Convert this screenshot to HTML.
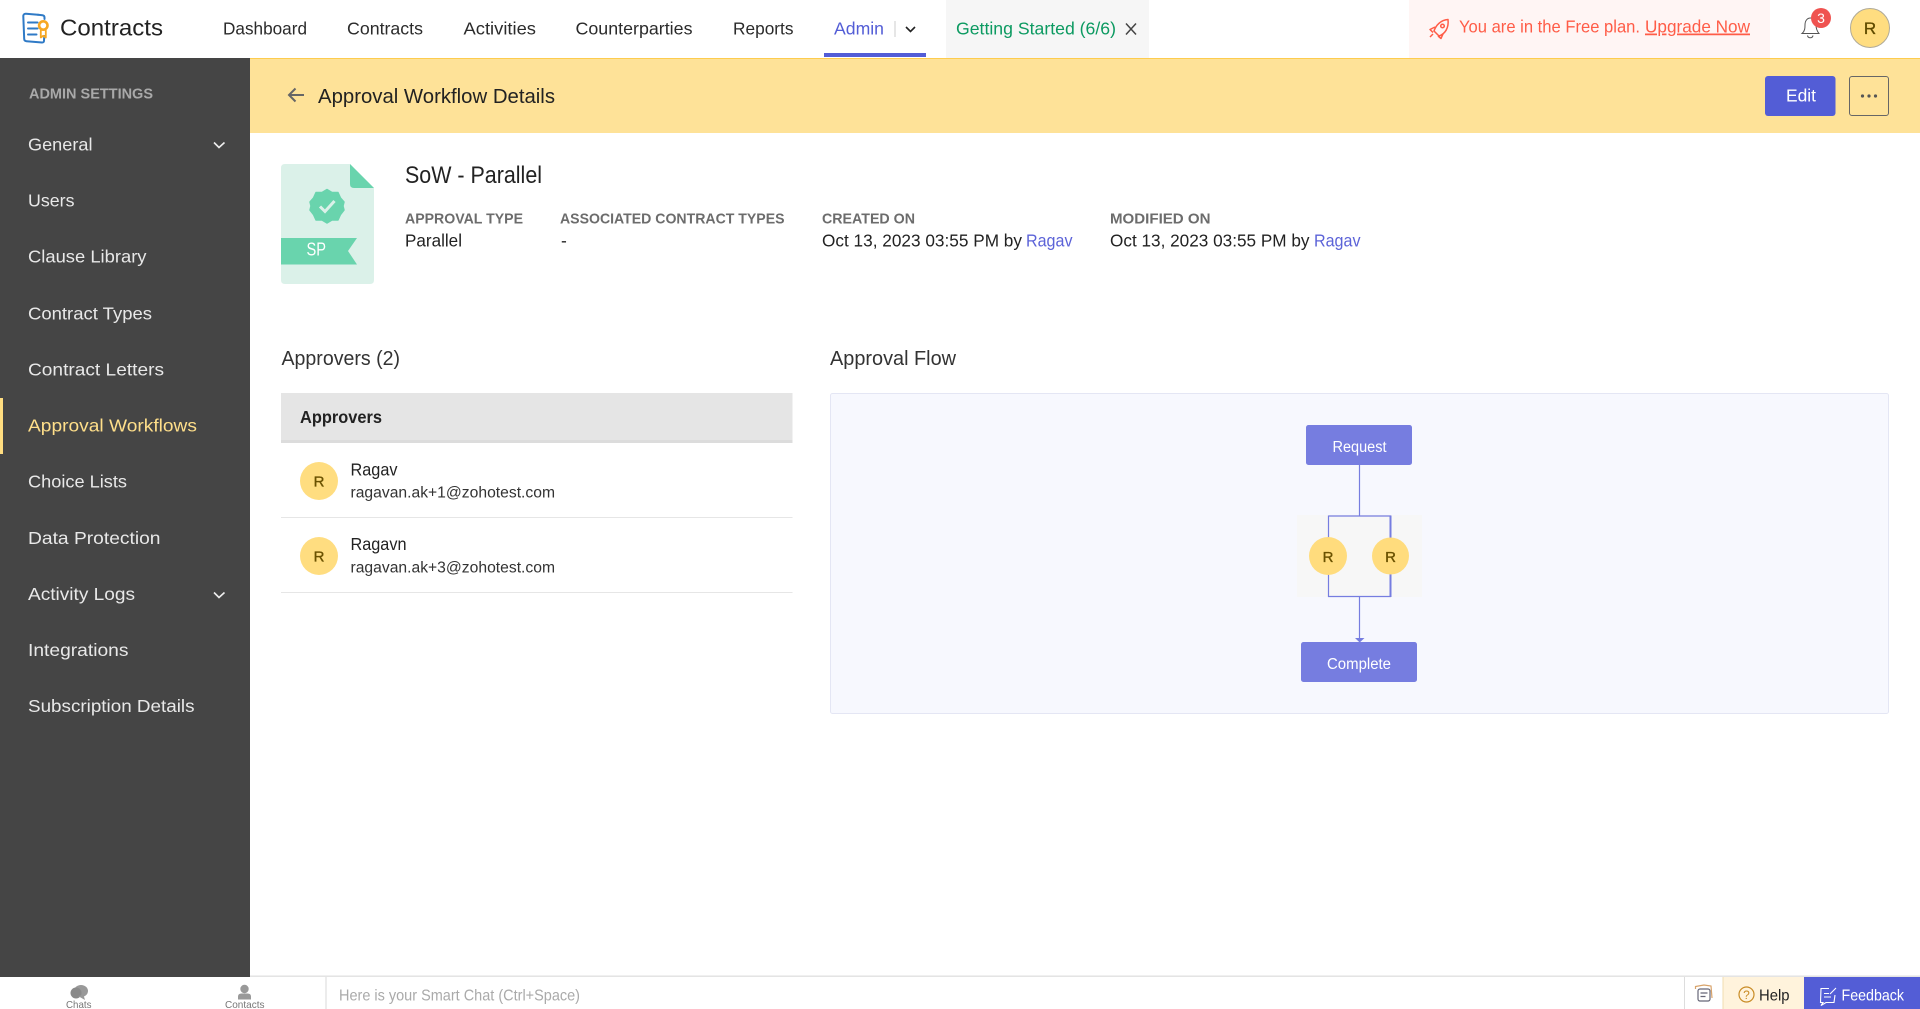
<!DOCTYPE html>
<html lang="en"><head><meta charset="utf-8"><title>Approval Workflow Details</title>
<style>
html,body{margin:0;padding:0;width:1920px;height:1009px;overflow:hidden;background:#fff}
svg{display:block}
text{font-family:"Liberation Sans",Arial,sans-serif;font-size:17.5px;fill:#2b2b2b}
.side{fill:#e8e8e8}
.lab{font-size:15px;fill:#6c6c6c;font-weight:bold}
.r{stroke:#6b5200;stroke-width:.35px}
</style></head><body>
<svg width="1920" height="1009" viewBox="0 0 1920 1009" xmlns="http://www.w3.org/2000/svg">
<rect width="1920" height="1009" fill="#fff"/>
<!-- top nav -->
<g fill="none" stroke-linecap="round">
<path d="M38 14.800L26 13.800Q23.300 13.600 23.300 16.300L24.200 39Q24.300 41 26.500 41.200L42 42.500Q44 42.600 44 40.600L44.300 36" stroke="#2f7ac6" stroke-width="2"/>
<path d="M38 14.800L42.500 15.200Q44.500 15.400 44.500 17.500V19" stroke="#2f7ac6" stroke-width="2"/>
<path d="M28 22.500H37.500M28 28.500H37.500M28 34.500H36.500" stroke="#2f7ac6" stroke-width="2"/>
<circle cx="43.300" cy="25.500" r="4.200" stroke="#f7a823" stroke-width="2.600"/>
<path d="M40.800 30.500V37.500L43.300 35.800L45.800 37.500V30.500" stroke="#f7a823" stroke-width="1.800" stroke-linejoin="round"/>
</g>
<text x="60" y="35.500" textLength="103" lengthAdjust="spacingAndGlyphs" style="font-size:23px;fill:#222">Contracts</text>
<text x="223" y="34.500" textLength="84" lengthAdjust="spacingAndGlyphs">Dashboard</text>
<text x="347" y="34.500" textLength="76" lengthAdjust="spacingAndGlyphs">Contracts</text>
<text x="463.500" y="34.500" textLength="72.500" lengthAdjust="spacingAndGlyphs">Activities</text>
<text x="575.500" y="34.500" textLength="117" lengthAdjust="spacingAndGlyphs">Counterparties</text>
<text x="733" y="34.500" textLength="60.500" lengthAdjust="spacingAndGlyphs">Reports</text>
<text x="834" y="34.500" textLength="50" lengthAdjust="spacingAndGlyphs" style="fill:#535dd6">Admin</text>
<rect x="894.500" y="21" width="1" height="16" fill="#ccc"/>
<path d="M906 27L910.500 31.500L915 27" fill="none" stroke="#222" stroke-width="1.600"/>
<rect x="824" y="53" width="102" height="4" fill="#535dd6"/>
<rect x="946" y="0" width="203" height="58" fill="#f6f6f6"/>
<text x="956" y="34.500" textLength="160" lengthAdjust="spacingAndGlyphs" style="fill:#0c9a61">Getting Started (6/6)</text>
<path d="M1126 23.500L1136 34.500M1136 23.500L1126 34.500" stroke="#444" stroke-width="1.500" fill="none"/>
<rect x="1409" y="0" width="361" height="58" fill="#fff5f4"/>
<g fill="none" stroke="#ff5c47" stroke-width="1.500" stroke-linejoin="round">
<path d="M1448 19.500C1441 20 1436 25 1434 31L1439 36C1445 34 1449 28 1448 19.500Z"/>
<circle cx="1442.500" cy="26" r="1.800"/>
<path d="M1435 27L1430 29.500L1433 32.500M1443 34L1441 38.500L1438 36M1433 34L1430 37"/>
</g>
<text x="1459" y="32.500" textLength="181" lengthAdjust="spacingAndGlyphs" style="fill:#ff5c47">You are in the Free plan.</text>
<text x="1645" y="32.500" textLength="105" lengthAdjust="spacingAndGlyphs" style="fill:#ff5c47;text-decoration:underline">Upgrade Now</text>
<g fill="none" stroke="#555" stroke-width="1">
<path d="M1802 33.500C1805 31 1805 28 1805 25C1805 21 1807 18 1810.500 18C1814 18 1816 21 1816 25C1816 28 1817 31 1819 33.500Z"/>
<path d="M1807.500 35.500C1808 38.500 1812.500 38.500 1813 35.500"/>
</g>
<circle cx="1821" cy="18" r="10" fill="#ef5350"/>
<text x="1821" y="23" text-anchor="middle" style="font-size:14px;fill:#fff">3</text>
<circle cx="1870" cy="28" r="19.500" fill="#ffdd80" stroke="#b0aa98" stroke-width="1"/>
<text class="r" x="1870" y="34" text-anchor="middle" style="font-size:17px;fill:#5d4a00">R</text>
<!-- sidebar -->
<rect x="0" y="58" width="250" height="919" fill="#454545"/>
<text x="29" y="98.500" textLength="124" lengthAdjust="spacingAndGlyphs" style="font-size:14.500px;font-weight:bold;fill:#a9a9a9">ADMIN SETTINGS</text>
<g>
<text class="side" x="28" y="150.500" textLength="64.500" lengthAdjust="spacingAndGlyphs">General</text>
<path d="M214 142.500L219 147.500L224.500 142.500" fill="none" stroke="#eee" stroke-width="1.600"/>
<text class="side" x="28" y="206.500" textLength="46.500" lengthAdjust="spacingAndGlyphs">Users</text>
<text class="side" x="28" y="262.500" textLength="118.500" lengthAdjust="spacingAndGlyphs">Clause Library</text>
<text class="side" x="28" y="319.500" textLength="124" lengthAdjust="spacingAndGlyphs">Contract Types</text>
<text class="side" x="28" y="375.500" textLength="136" lengthAdjust="spacingAndGlyphs">Contract Letters</text>
<rect x="0" y="398" width="3" height="56" fill="#ffdd80"/>
<text x="28" y="431.500" textLength="169" lengthAdjust="spacingAndGlyphs" style="fill:#ffdf8a">Approval Workflows</text>
<text class="side" x="28" y="487.500" textLength="99" lengthAdjust="spacingAndGlyphs">Choice Lists</text>
<text class="side" x="28" y="544" textLength="132.500" lengthAdjust="spacingAndGlyphs">Data Protection</text>
<text class="side" x="28" y="600" textLength="107" lengthAdjust="spacingAndGlyphs">Activity Logs</text>
<path d="M214 592.500L219 597.500L224.500 592.500" fill="none" stroke="#eee" stroke-width="1.600"/>
<text class="side" x="28" y="656" textLength="100.500" lengthAdjust="spacingAndGlyphs">Integrations</text>
<text class="side" x="28" y="712" textLength="166.500" lengthAdjust="spacingAndGlyphs">Subscription Details</text>
</g>
<!-- yellow header -->
<rect x="250" y="58" width="1670" height="75" fill="#fee298"/>
<rect x="250" y="58" width="1670" height="1" fill="#fdcc4e"/>
<path d="M304 95H289.500M295.500 88.500L289 95L295.500 101.500" fill="none" stroke="#666" stroke-width="2"/>
<text x="318" y="103" textLength="237" lengthAdjust="spacingAndGlyphs" style="font-size:20.500px;fill:#222">Approval Workflow Details</text>
<rect x="1765" y="76" width="70.500" height="40" rx="3" fill="#535dd6"/>
<text x="1786" y="101.500" textLength="30" lengthAdjust="spacingAndGlyphs" style="fill:#fff">Edit</text>
<rect x="1849.500" y="76.500" width="39" height="39" rx="2.500" fill="none" stroke="#666" stroke-width="1"/>
<g fill="#555"><circle cx="1862.500" cy="96" r="1.600"/><circle cx="1869" cy="96" r="1.600"/><circle cx="1875.500" cy="96" r="1.600"/></g>
<!-- doc icon -->
<path d="M285 164H350L374 188V280Q374 284 370 284H285Q281 284 281 280V168Q281 164 285 164Z" fill="#dbf1e9"/>
<path d="M350 164L374 188H354Q350 188 350 184Z" fill="#69d4ad"/>
<path d="M327 189.500L332 192.500L338 192.500L340.500 198L344 202L343 206L344 210L340.500 214.500L338 220L332 220L327 223L322 220L316 220L313.500 214.500L310 210L311 206L310 202L313.500 198L316 192.500L322 192.500Z" fill="#69d4ad" stroke="#69d4ad" stroke-width="1.500" stroke-linejoin="round"/>
<path d="M320 206.500L325 211.500L334.500 201" fill="none" stroke="#dbf1e9" stroke-width="3"/>
<path d="M281 238H357L348 251L357 264.500H281Z" fill="#69d4ad"/>
<text x="306.500" y="255.500" textLength="19.500" lengthAdjust="spacingAndGlyphs" style="font-size:18.500px;fill:#fff">SP</text>
<!-- details -->
<text x="405" y="183" textLength="137" lengthAdjust="spacingAndGlyphs" style="font-size:24px;fill:#222">SoW - Parallel</text>
<text class="lab" x="405" y="223.500" textLength="118" lengthAdjust="spacingAndGlyphs">APPROVAL TYPE</text>
<text class="lab" x="560" y="223.500" textLength="224.500" lengthAdjust="spacingAndGlyphs">ASSOCIATED CONTRACT TYPES</text>
<text class="lab" x="822" y="223.500" textLength="93" lengthAdjust="spacingAndGlyphs">CREATED ON</text>
<text class="lab" x="1110" y="223.500" textLength="100.500" lengthAdjust="spacingAndGlyphs">MODIFIED ON</text>
<text x="405" y="246.500" textLength="57" lengthAdjust="spacingAndGlyphs" style="fill:#222">Parallel</text>
<text x="561" y="246.500" style="fill:#222">-</text>
<text x="822" y="246.500" textLength="200" lengthAdjust="spacingAndGlyphs" style="fill:#222">Oct 13, 2023 03:55 PM by</text>
<text x="1026" y="246.500" textLength="46.500" lengthAdjust="spacingAndGlyphs" style="fill:#5c63d8">Ragav</text>
<text x="1110" y="246.500" textLength="199.500" lengthAdjust="spacingAndGlyphs" style="fill:#222">Oct 13, 2023 03:55 PM by</text>
<text x="1314" y="246.500" textLength="46.500" lengthAdjust="spacingAndGlyphs" style="fill:#5c63d8">Ragav</text>
<!-- approvers -->
<text x="281.500" y="365" textLength="118.500" lengthAdjust="spacingAndGlyphs" style="font-size:20.500px;fill:#333">Approvers (2)</text>
<rect x="281" y="393" width="511.500" height="47" fill="#e5e5e5"/>
<rect x="281" y="440" width="511.500" height="3" fill="#dcdcdc"/>
<text x="300" y="423" textLength="82" lengthAdjust="spacingAndGlyphs" style="font-weight:bold;fill:#222">Approvers</text>
<circle cx="319" cy="481" r="19" fill="#ffdd80"/>
<text class="r" x="319" y="486.500" text-anchor="middle" style="font-size:15px;fill:#6b5200">R</text>
<text x="350.500" y="475.500" textLength="47" lengthAdjust="spacingAndGlyphs" style="fill:#222">Ragav</text>
<text x="350.500" y="497.500" textLength="204.500" lengthAdjust="spacingAndGlyphs" style="font-size:15.500px;fill:#333">ragavan.ak+1@zohotest.com</text>
<rect x="281" y="517" width="511.500" height="1" fill="#e6e6e6"/>
<circle cx="319" cy="556" r="19" fill="#ffdd80"/>
<text class="r" x="319" y="561.500" text-anchor="middle" style="font-size:15px;fill:#6b5200">R</text>
<text x="350.500" y="550" textLength="56" lengthAdjust="spacingAndGlyphs" style="fill:#222">Ragavn</text>
<text x="350.500" y="572.500" textLength="204.500" lengthAdjust="spacingAndGlyphs" style="font-size:15.500px;fill:#333">ragavan.ak+3@zohotest.com</text>
<rect x="281" y="592" width="511.500" height="1" fill="#e6e6e6"/>
<!-- flow -->
<text x="830" y="365" textLength="126" lengthAdjust="spacingAndGlyphs" style="font-size:20.500px;fill:#333">Approval Flow</text>
<rect x="830.500" y="393.500" width="1058" height="320" rx="2" fill="#f7f8fe" stroke="#e4e6f4"/>
<rect x="1297" y="515" width="125" height="82" fill="#f7f7f7"/>
<path d="M1359.500 465V515.500M1328.500 516H1391M1328.500 515.500V597M1328 596.500H1391M1359.500 597V640" fill="none" stroke="#767de0" stroke-width="1.200"/>
<path d="M1390.500 515.500V597" fill="none" stroke="#767de0" stroke-width="2"/>
<path d="M1355 638H1364.500L1359.700 642.500Z" fill="#767de0"/>
<rect x="1306" y="425" width="106" height="40" rx="2.500" fill="#767de0"/>
<text x="1332.500" y="452" textLength="54" lengthAdjust="spacingAndGlyphs" style="font-size:15.500px;fill:#fff">Request</text>
<circle cx="1328" cy="556" r="19" fill="#ffdc7d"/>
<text class="r" x="1328" y="562" text-anchor="middle" style="font-size:15px;fill:#6b5200">R</text>
<circle cx="1390.500" cy="556" r="18.500" fill="#ffdc7d"/>
<text class="r" x="1390.500" y="562" text-anchor="middle" style="font-size:15px;fill:#6b5200">R</text>
<rect x="1301" y="642" width="116" height="40" rx="2.500" fill="#767de0"/>
<text x="1327" y="669" textLength="64" lengthAdjust="spacingAndGlyphs" style="font-size:15.500px;fill:#fff">Complete</text>
<!-- bottom bar -->
<rect x="250" y="975" width="1670" height="1" fill="#f0f0f0"/>
<rect x="250" y="976" width="1670" height="1" fill="#e4e4e4"/>
<rect x="0" y="977" width="1920" height="32" fill="#fff"/>
<g fill="#999">
<ellipse cx="81" cy="991" rx="7" ry="6"/>
<ellipse cx="76" cy="993" rx="5.500" ry="5.500" fill="#8a8a8a"/>
<path d="M78 996L85 1000L83.500 995Z"/>
<circle cx="244.500" cy="989" r="4.200"/>
<path d="M238 999.500V996.500Q238 993.500 241.500 993.500H247.500Q251 993.500 251 996.500V999.500Z"/>
</g>
<text x="66" y="1008" textLength="25.500" lengthAdjust="spacingAndGlyphs" style="font-size:10.500px;fill:#777">Chats</text>
<text x="225" y="1008" textLength="39.500" lengthAdjust="spacingAndGlyphs" style="font-size:10.500px;fill:#777">Contacts</text>
<rect x="325" y="977" width="2" height="32" fill="#ececec"/>
<text x="339" y="1000.500" textLength="241" lengthAdjust="spacingAndGlyphs" style="font-size:16px;fill:#aaa">Here is your Smart Chat (Ctrl+Space)</text>
<rect x="1684" y="977" width="1" height="32" fill="#ddd"/>
<g fill="none" stroke-width="1.200">
<path d="M1695.500 989V986.500L1704 985L1711 986L1712 998" stroke="#d8a36a"/>
<rect x="1698" y="989" width="12" height="12" rx="2" stroke="#667" fill="#fff"/>
<path d="M1700.500 993H1707.500M1700.500 996.500H1705.500" stroke="#667"/>
</g>
<rect x="1722.500" y="977" width="81.500" height="32" fill="#fff3dc"/>
<rect x="1722.500" y="977" width="1" height="32" fill="#f0ddb0"/>
<circle cx="1746.500" cy="994.500" r="7.500" fill="none" stroke="#c98c25" stroke-width="1.200"/>
<text x="1746.500" y="999" text-anchor="middle" style="font-size:12px;fill:#c98c25">?</text>
<text x="1759" y="1000.500" textLength="30.500" lengthAdjust="spacingAndGlyphs" style="font-size:16px;fill:#222">Help</text>
<rect x="1804" y="977" width="116" height="32" fill="#535dd6"/>
<g fill="none" stroke="#fff" stroke-width="1.100">
<path d="M1829 988.500H1821L1820.500 1002.500H1823L1821 1005.500L1826 1002.500H1834L1835 995"/>
<path d="M1824 993.500H1829M1824 997H1831M1830 994L1836 988"/>
</g>
<text x="1841.500" y="1000.500" textLength="62.500" lengthAdjust="spacingAndGlyphs" style="font-size:16px;fill:#fff">Feedback</text>
</svg>
</body></html>
